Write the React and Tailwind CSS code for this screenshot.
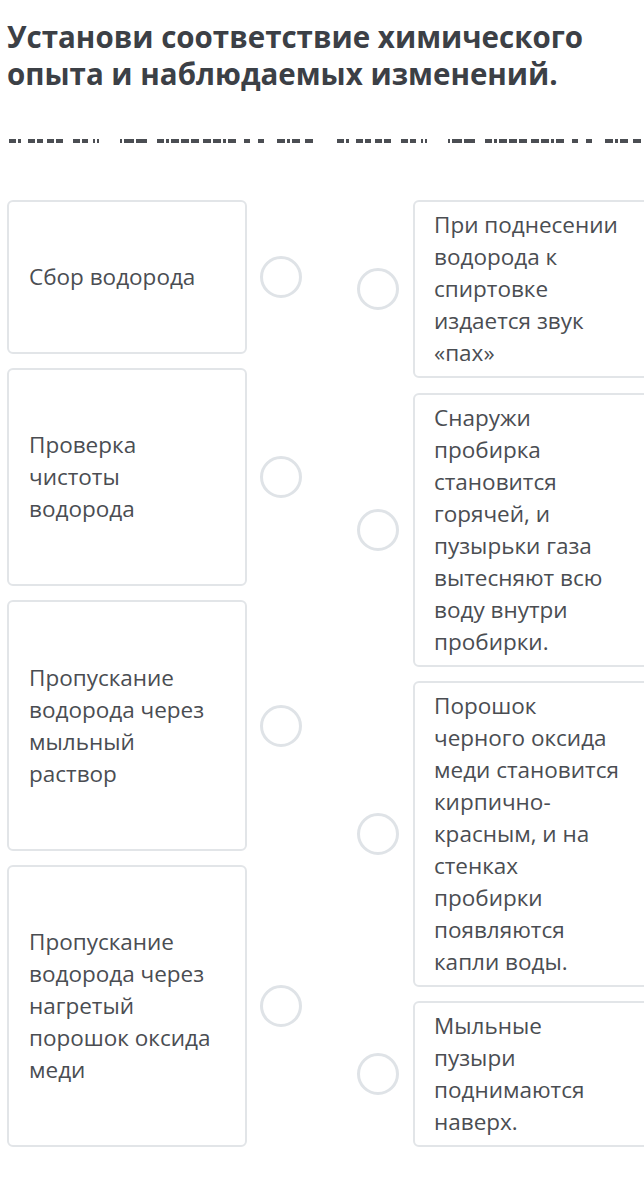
const leftItems = [
  { h: "h-[154px]", lines: ["Сбор водорода"] },
  { h: "h-[218px]", lines: ["Проверка", "чистоты", "водорода"] },
  { h: "h-[251px]", lines: ["Пропускание", "водорода через", "мыльный", "раствор"] },
  { h: "h-[282px]", lines: ["Пропускание", "водорода через", "нагретый", "порошок оксида", "меди"] },
];

const rightItems = [
  ["При поднесении", "водорода к", "спиртовке", "издается звук", "«пах»"],
  ["Снаружи", "пробирка", "становится", "горячей, и", "пузырьки газа", "вытесняют всю", "воду внутри", "пробирки."],
  ["Порошок", "черного оксида", "меди становится", "кирпично-", "красным, и на", "стенках", "пробирки", "появляются", "капли воды."],
  ["Мыльные", "пузыри", "поднимаются", "наверх."],
];

// dash pattern under the title, one half; it repeats every 328px
const dashes = [
  [0, 7], [9, 3], [19, 7], [28, 6], [38, 7], [47, 7],
  [64, 7], [73, 6], [84, 2], [88, 2],
  [111, 2], [115, 10], [127, 11],
  [148, 7], [157, 3], [162, 8], [172, 8], [182, 8], [194, 8], [204, 8], [214, 3],
  [219, 8], [235, 6], [249, 6], [268, 8], [278, 3], [283, 8], [296, 8],
];

const Circle = () => (
  <div className="w-[42px] h-[42px] shrink-0 rounded-full border-[3px] border-[#dfe3e7] bg-white" />
);

const DashLine = () => (
  <svg width="644" height="10" className="block">
    {[9, 337].map((start) =>
      dashes.map(([x, w]) => (
        <rect key={`${start}-${x}`} x={start + x} y="3" width={w} height="4" fill="#4b4e53" />
      ))
    )}
  </svg>
);

export default function App() {
  return (
    <div className="w-full min-h-screen bg-white overflow-hidden font-['Open_Sans',sans-serif] text-[#4a4d52]">
      <h1 className="px-[7px] pt-[18px] text-[29.5px] leading-[37px] font-bold text-[#3c4046] whitespace-nowrap">
        Установи соответствие химического
        <br />
        опыта и наблюдаемых изменений.
      </h1>

      <div className="mt-[44px]">
        <DashLine />
      </div>

      <div className="flex mt-[54px] pl-[7px] pb-[38px]">
        <div className="flex flex-col gap-[14px] shrink-0">
          {leftItems.map((item, i) => (
            <div key={i} className="flex items-center">
              <div
                className={`w-[240px] ${item.h} shrink-0 flex flex-col justify-center border-2 border-[#e2e5e8] rounded-[6px] pl-[20px] text-[22.5px] leading-[32px]`}
              >
                {item.lines.map((l) => (
                  <span key={l} className="whitespace-nowrap">{l}</span>
                ))}
              </div>
              <div className="ml-[13px]">
                <Circle />
              </div>
            </div>
          ))}
        </div>

        <div className="ml-[55px] flex flex-col shrink-0">
          {rightItems.map((lines, i) => (
            <div key={i} className={`flex items-center ${i === 0 ? "" : i === 1 ? "mt-[15px]" : "mt-[14px]"}`}>
              <Circle />
              <div className="ml-[14px] w-[248px] shrink-0 border-2 border-[#e2e5e8] rounded-[6px] pl-[19px] py-[7px] text-[22.5px] leading-[32px] flex flex-col">
                {lines.map((l) => (
                  <span key={l} className="whitespace-nowrap">{l}</span>
                ))}
              </div>
            </div>
          ))}
        </div>
      </div>
    </div>
  );
}
